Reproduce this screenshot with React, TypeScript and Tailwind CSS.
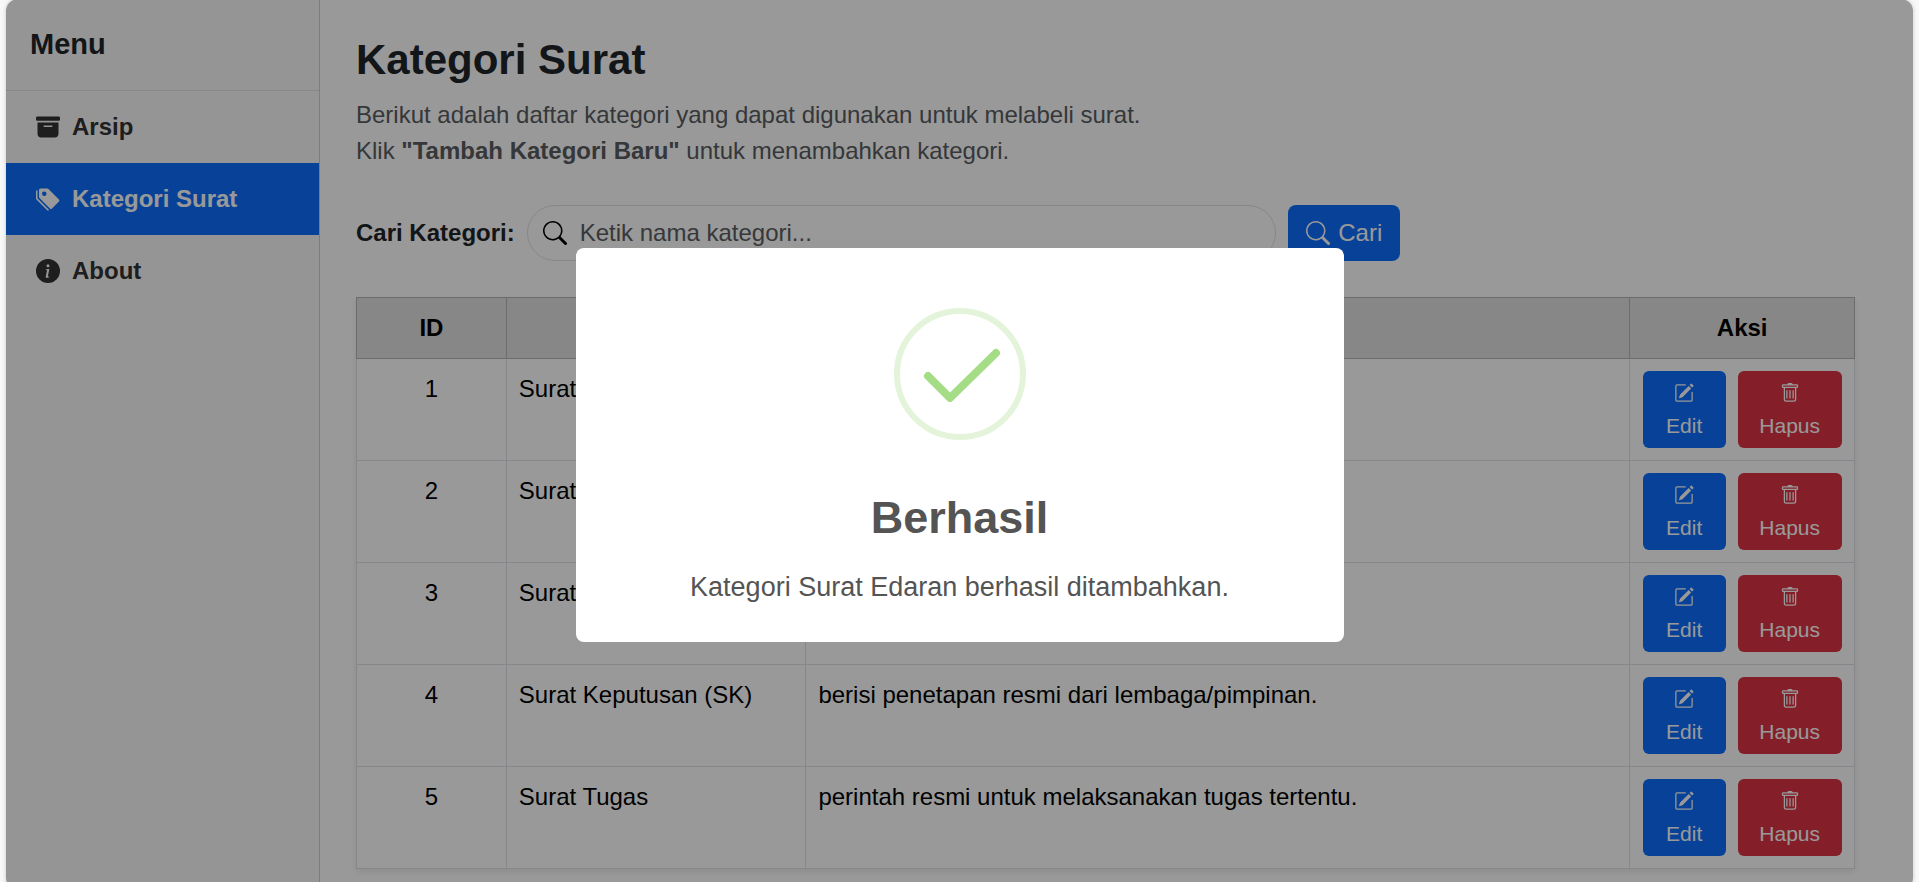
import type { ReactNode } from "react";
import { BsArchiveFill, BsTagsFill, BsInfoCircleFill, BsSearch, BsPencilSquare, BsTrash } from "react-icons/bs";

type Category = { id: number; name: string; description: string };

const categories: Category[] = [
  { id: 1, name: "Surat", description: "" },
  { id: 2, name: "Surat", description: "" },
  { id: 3, name: "Surat", description: "" },
  { id: 4, name: "Surat Keputusan (SK)", description: "berisi penetapan resmi dari lembaga/pimpinan." },
  { id: 5, name: "Surat Tugas", description: "perintah resmi untuk melaksanakan tugas tertentu." },
];

function MenuLink({ icon, label, active = false }: { icon: ReactNode; label: string; active?: boolean }) {
  return (
    <a
      href="#"
      aria-current={active ? "page" : undefined}
      className={
        active
          ? "flex items-center gap-3 bg-[#0d6efd] px-[30px] py-[18px] font-bold text-white"
          : "flex items-center gap-3 px-[30px] py-[18px] font-bold text-[#333]"
      }
    >
      {icon}
      {label}
    </a>
  );
}

function Sidebar() {
  return (
    <aside className="w-[314px] shrink-0 border-r border-[#ced0d2] bg-[#f8f9fa]">
      <div className="border-b border-[#dee2e6] px-6 pt-[26px] pb-[27px]">
        <h2 className="text-[29px] leading-[38px] font-bold">Menu</h2>
      </div>
      <nav>
        <MenuLink icon={<BsArchiveFill />} label="Arsip" />
        <MenuLink icon={<BsTagsFill />} label="Kategori Surat" active />
        <MenuLink icon={<BsInfoCircleFill />} label="About" />
      </nav>
    </aside>
  );
}

function SearchForm() {
  return (
    <form className="mt-9 flex items-center gap-3">
      <label htmlFor="search" className="font-bold">
        Cari Kategori:
      </label>
      <div className="flex h-14 w-1/2 items-center gap-[13px] rounded-full border border-[#dee2e6] bg-white px-[15px]">
        <BsSearch className="shrink-0 text-black" />
        <input
          id="search"
          type="text"
          placeholder="Ketik nama kategori..."
          className="min-w-0 grow bg-transparent outline-none placeholder:text-[#5a5e62]"
        />
      </div>
      <button type="button" className="flex h-14 items-center gap-2 rounded-lg bg-[#0d6efd] px-[18px] text-white">
        <BsSearch />
        Cari
      </button>
    </form>
  );
}

function CategoryTable() {
  return (
    <table className="mt-9 w-full table-fixed border-collapse text-black shadow-[0_3px_6px_rgba(0,0,0,0.08)]">
      <colgroup>
        <col className="w-[10%]" />
        <col className="w-[20%]" />
        <col className="w-[55%]" />
        <col className="w-[15%]" />
      </colgroup>
      <thead>
        <tr className="bg-[#e2e2e2]">
          {["ID", "Nama", "Keterangan", "Aksi"].map((title) => (
            <th key={title} className="border border-[#b5b5b5] p-3 font-bold">
              {title}
            </th>
          ))}
        </tr>
      </thead>
      <tbody>
        {categories.map((category) => (
          <tr key={category.id} className="align-top">
            <td className="border border-[#dee2e6] p-3 text-center">{category.id}</td>
            <td className="border border-[#dee2e6] p-3">{category.name}</td>
            <td className="border border-[#dee2e6] p-3">{category.description}</td>
            <td className="border border-[#dee2e6] p-3">
              <div className="flex justify-center gap-3 text-[21px] leading-8 text-white">
                <button type="button" className="flex w-[83px] flex-col items-center rounded-md bg-[#0d6efd] py-[6px]">
                  <BsPencilSquare className="mt-[6px] mb-[7px] h-5 w-5" />
                  Edit
                </button>
                <button type="button" className="flex w-[104px] flex-col items-center rounded-md bg-[#dc3545] py-[6px]">
                  <BsTrash className="mt-[6px] mb-[7px] h-5 w-5" />
                  Hapus
                </button>
              </div>
            </td>
          </tr>
        ))}
      </tbody>
    </table>
  );
}

function SuccessDialog() {
  return (
    <div className="fixed inset-x-[6px] -top-px -bottom-2 flex items-center justify-center rounded-xl bg-black/40">
      <div
        role="dialog"
        aria-labelledby="dialog-title"
        className="flex w-[768px] flex-col items-center rounded-lg bg-white pt-[60px] pb-[35px] text-[#545454]"
      >
        <svg width="132" height="132" viewBox="0 0 132 132" fill="none" aria-hidden="true">
          <circle cx="66" cy="66" r="63" stroke="#e4f4db" strokeWidth="6" />
          <path d="M34 68 L56 90 L102 45" stroke="#a5dc86" strokeWidth="8" strokeLinecap="round" strokeLinejoin="round" />
        </svg>
        <h2 id="dialog-title" className="mt-[45px] text-[45px] leading-[66px] font-bold">
          Berhasil
        </h2>
        <p className="mt-4 text-[27px] leading-10">Kategori Surat Edaran berhasil ditambahkan.</p>
      </div>
    </div>
  );
}

export default function App() {
  return (
    <div className="h-screen overflow-hidden bg-[#f8f8f8] px-[6px] font-['Liberation_Sans',Arial,sans-serif] text-2xl leading-9 text-[#212529]">
      <div className="-mt-px flex h-[calc(100vh+9px)] overflow-hidden rounded-xl bg-white shadow-[0_0_4px_rgba(0,0,0,0.2)]">
        <Sidebar />
        <main className="min-w-0 grow py-9 pr-[58px] pl-9">
          <h1 className="text-[42px] leading-[50px] font-bold">Kategori Surat</h1>
          <p className="mt-3 text-[#595c5f]">
            Berikut adalah daftar kategori yang dapat digunakan untuk melabeli surat.
            <br />
            Klik <strong>"Tambah Kategori Baru"</strong> untuk menambahkan kategori.
          </p>
          <SearchForm />
          <CategoryTable />
        </main>
      </div>
      <SuccessDialog />
    </div>
  );
}
